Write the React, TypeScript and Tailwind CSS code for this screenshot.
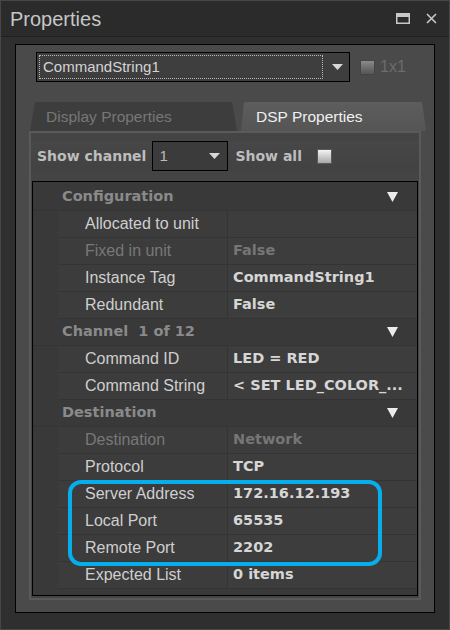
import React from 'react'

const sans = { fontFamily: '"Liberation Sans", Arial, sans-serif' }
const bold = { fontFamily: '"DejaVu Sans", Verdana, sans-serif' }

type Row = { name: string; value: string; disabled?: boolean }
type Section = { title: string; rows: Row[] }

const sections: Section[] = [
  {
    title: 'Configuration',
    rows: [
      { name: 'Allocated to unit', value: '' },
      { name: 'Fixed in unit', value: 'False', disabled: true },
      { name: 'Instance Tag', value: 'CommandString1' },
      { name: 'Redundant', value: 'False' },
    ],
  },
  {
    title: 'Channel\u00a0 1 of 12',
    rows: [
      { name: 'Command ID', value: 'LED = RED' },
      { name: 'Command String', value: '< SET LED_COLOR_...' },
    ],
  },
  {
    title: 'Destination',
    rows: [
      { name: 'Destination', value: 'Network', disabled: true },
      { name: 'Protocol', value: 'TCP' },
      { name: 'Server Address', value: '172.16.12.193' },
      { name: 'Local Port', value: '65535' },
      { name: 'Remote Port', value: '2202' },
      { name: 'Expected List', value: '0 items' },
    ],
  },
]

function DownArrow({ className = '' }: any) {
  return (
    <svg width="11" height="6" viewBox="0 0 11 6" className={className}>
      <polygon points="0,0 11,0 5.5,6" fill="#d8d8d8" />
    </svg>
  )
}

function Checkbox({ light }: any) {
  return (
    <div
      className={`w-[15px] h-[15px] border ${
        light ? 'border-[#5a5a5a] bg-gradient-to-b from-[#f4f4f4] to-[#a8a8a8]' : 'border-[#444] bg-gradient-to-b from-[#8a8a8a] to-[#555]'
      }`}
    />
  )
}

export default function App() {
  return (
    <div className="w-[450px] h-[630px] bg-[#2f2f2f] border border-[#464646] flex flex-col overflow-hidden" style={sans}>
      {/* title bar */}
      <div className="h-[36px] shrink-0 flex items-center justify-between pl-[9px] pr-[12px] bg-[#2b2b2b] border-b border-[#1f1f1f]">
        <span className="text-[20px] text-[#c6c6c6] leading-none">Properties</span>
        <div className="flex items-center gap-[16px]">
          <svg width="14" height="11" viewBox="0 0 14 11">
            <rect x="0.75" y="0.75" width="12.5" height="9.5" fill="none" stroke="#c8c8c8" strokeWidth="1.5" />
            <rect x="0" y="0" width="14" height="4" fill="#c8c8c8" />
          </svg>
          <svg width="11" height="11" viewBox="0 0 11 11">
            <path d="M1 1 L10 10 M10 1 L1 10" stroke="#c8c8c8" strokeWidth="1.6" />
          </svg>
        </div>
      </div>

      <div className="flex-1 flex flex-col pt-[7px] pb-[16px] px-[14px]">
        <div className="flex-1 flex flex-col border border-black bg-[#4a4a4a]">
          {/* object selector */}
          <div className="flex items-center pt-[7px] pl-[20px]">
            <div className="w-[314px] h-[30px] border border-black bg-[#3e3e3e] flex items-center pl-[2px] pr-[6px]">
              <div className="w-[285px] h-[24px] border border-dotted border-[#b8b8b8] flex items-center pl-[3px] text-[15px] text-[#d4d4d4]">
                CommandString1
              </div>
              <DownArrow className="ml-[9px]" />
            </div>
            <div className="ml-[10px]">
              <Checkbox />
            </div>
            <span className="ml-[5px] text-[16px] text-[#6c6c6c]">1x1</span>
          </div>

          {/* tabs */}
          <div className="flex items-end mt-[20px] pl-[14px] h-[29px] gap-[4px]">
            <div className="w-[207px] h-[29px] bg-[#3d3d3d] rounded-t-[6px] [clip-path:polygon(5px_0,calc(100%-5px)_0,100%_100%,0_100%)] flex items-center pl-[16px] text-[15.5px] text-[#777]">
              Display Properties
            </div>
            <div className="w-[185px] h-[29px] bg-gradient-to-b from-[#5d5d5d] to-[#555] rounded-t-[6px] [clip-path:polygon(3px_0,calc(100%-4px)_0,100%_100%,0_100%)] flex items-center pl-[15px] text-[15.5px] text-[#f0f0f0]">
              DSP Properties
            </div>
          </div>

          {/* tab content */}
          <div className="mx-[13px] mb-[12px] flex-1 border-2 border-[#5a5a5a] bg-[#444] flex flex-col">
            <div className="flex items-center h-[30px] mt-[8px] pl-[6px] bg-gradient-to-b from-[#474747] to-[#424242]">
              <span className="text-[14px] font-bold text-[#bdbdbd]" style={bold}>
                Show channel
              </span>
              <div className="ml-[6px] w-[76px] h-[30px] border border-black bg-[#3b3b3b] flex items-center justify-between pl-[6px] pr-[7px] text-[15px] text-[#bcbcbc]">
                1
                <DownArrow />
              </div>
              <span className="ml-[7px] text-[14px] font-bold text-[#bdbdbd]" style={bold}>
                Show all
              </span>
              <div className="ml-[15px]">
                <Checkbox light />
              </div>
            </div>

            {/* property grid */}
            <div className="relative mt-[10px] mx-[1px] mb-[2px] flex-1 border border-black bg-[#393939] pt-[2px]">
              {sections.map((s) => (
                <div key={s.title}>
                  <div className="h-[27px] flex items-center justify-between pl-[29px] pr-[19px] bg-[#393939] border-b border-[#343434]">
                    <span className="text-[14.5px] font-bold text-[#8a8a8a]" style={bold}>
                      {s.title}
                    </span>
                    <svg width="11" height="10" viewBox="0 0 11 10">
                      <polygon points="0,0 11,0 5.5,10" fill="#ececec" />
                    </svg>
                  </div>
                  {s.rows.map((r) => (
                    <div key={r.name} className="h-[27px] flex pl-[25px]">
                      <div className="w-[170px] flex items-center pl-[27px] bg-[#3c3c3c] border-r border-b border-[#343434]">
                        <span className={`text-[16px] whitespace-nowrap ${r.disabled ? 'text-[#787878]' : 'text-[#cfcfcf]'}`}>{r.name}</span>
                      </div>
                      <div className="flex-1 flex items-center pl-[5px] bg-[#3d3d3d] border-b border-[#343434] overflow-hidden">
                        <span
                          className={`text-[14.5px] font-bold whitespace-nowrap ${r.disabled ? 'text-[#767676]' : 'text-[#d6d6d6]'}`}
                          style={bold}
                        >
                          {r.value}
                        </span>
                      </div>
                    </div>
                  ))}
                </div>
              ))}

              {/* highlight around the network settings */}
              <div className="absolute left-[35px] top-[298px] w-[314px] h-[86px] border-[4px] border-[#06aeec] rounded-[13px]" />
            </div>
          </div>
        </div>
      </div>
    </div>
  )
}
